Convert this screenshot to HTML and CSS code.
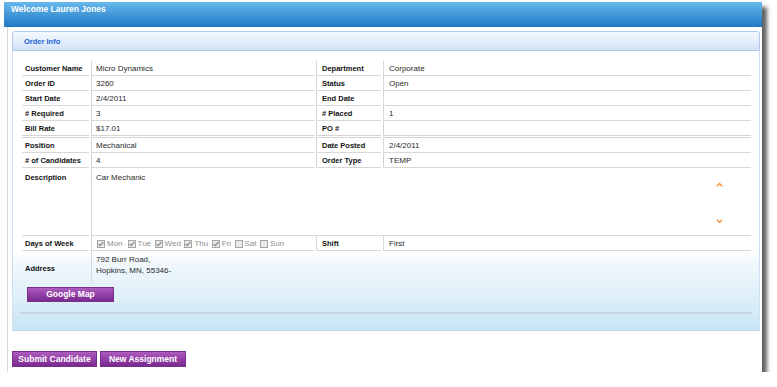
FILE: index.html
```html
<!DOCTYPE html>
<html>
<head>
<meta charset="utf-8">
<title>Order Info</title>
<link rel="stylesheet" href="styles.css">
</head>
<body>
<div class="panel">
  <div class="topbar">Welcome Lauren Jones</div>
  <div class="panel-body">
    <div class="section">
      <div class="section-head">Order Info</div>
      <div class="section-body">
        <div class="grid">
          <div class="cell lbl">Customer Name</div><div class="cell val">Micro Dynamics</div><div class="cell lbl l2">Department</div><div class="cell val v2">Corporate</div>
          <div class="cell lbl">Order ID</div><div class="cell val">3260</div><div class="cell lbl l2">Status</div><div class="cell val v2">Open</div>
          <div class="cell lbl">Start Date</div><div class="cell val">2/4/2011</div><div class="cell lbl l2">End Date</div><div class="cell val v2"></div>
          <div class="cell lbl"># Required</div><div class="cell val">3</div><div class="cell lbl l2"># Placed</div><div class="cell val v2">1</div>
          <div class="cell lbl dbl">Bill Rate</div><div class="cell val dbl">$17.01</div><div class="cell lbl l2 dbl">PO #</div><div class="cell val v2 dbl"></div>
          <div class="cell lbl">Position</div><div class="cell val">Mechanical</div><div class="cell lbl l2">Date Posted</div><div class="cell val v2">2/4/2011</div>
          <div class="cell lbl"># of Candidates</div><div class="cell val">4</div><div class="cell lbl l2">Order Type</div><div class="cell val v2">TEMP</div>
          <div class="cell lbl desc-lbl">Description</div>
          <div class="cell val desc">
            <div class="desc-text">Car Mechanic</div>
            <div class="scroll">
              <svg width="7" height="5" viewBox="0 0 7 5"><path d="M0.8 4.2 L3.5 1.4 L6.2 4.2" fill="none" stroke="#f39444" stroke-width="1.4"/></svg>
              <svg width="7" height="5" viewBox="0 0 7 5"><path d="M0.8 0.8 L3.5 3.6 L6.2 0.8" fill="none" stroke="#f39444" stroke-width="1.4"/></svg>
            </div>
          </div>
          <div class="cell lbl">Days of Week</div>
          <div class="cell val days">
            <span class="day"><svg class="cb" width="8" height="8" viewBox="0 0 8 8"><rect x="0.5" y="0.5" width="7" height="7" fill="#ebebeb" stroke="#a5a5a5"/><path d="M1.7 4 L3.3 5.7 L6.4 2" fill="none" stroke="#8c8c8c" stroke-width="1.2"/></svg>Mon</span>
            <span class="day"><svg class="cb" width="8" height="8" viewBox="0 0 8 8"><rect x="0.5" y="0.5" width="7" height="7" fill="#ebebeb" stroke="#a5a5a5"/><path d="M1.7 4 L3.3 5.7 L6.4 2" fill="none" stroke="#8c8c8c" stroke-width="1.2"/></svg>Tue</span>
            <span class="day"><svg class="cb" width="8" height="8" viewBox="0 0 8 8"><rect x="0.5" y="0.5" width="7" height="7" fill="#ebebeb" stroke="#a5a5a5"/><path d="M1.7 4 L3.3 5.7 L6.4 2" fill="none" stroke="#8c8c8c" stroke-width="1.2"/></svg>Wed</span>
            <span class="day"><svg class="cb" width="8" height="8" viewBox="0 0 8 8"><rect x="0.5" y="0.5" width="7" height="7" fill="#ebebeb" stroke="#a5a5a5"/><path d="M1.7 4 L3.3 5.7 L6.4 2" fill="none" stroke="#8c8c8c" stroke-width="1.2"/></svg>Thu</span>
            <span class="day"><svg class="cb" width="8" height="8" viewBox="0 0 8 8"><rect x="0.5" y="0.5" width="7" height="7" fill="#ebebeb" stroke="#a5a5a5"/><path d="M1.7 4 L3.3 5.7 L6.4 2" fill="none" stroke="#8c8c8c" stroke-width="1.2"/></svg>Fri</span>
            <span class="day"><svg class="cb" width="8" height="8" viewBox="0 0 8 8"><rect x="0.5" y="0.5" width="7" height="7" fill="#ebebeb" stroke="#a5a5a5"/></svg>Sat</span>
            <span class="day"><svg class="cb" width="8" height="8" viewBox="0 0 8 8"><rect x="0.5" y="0.5" width="7" height="7" fill="#ebebeb" stroke="#a5a5a5"/></svg>Sun</span>
          </div>
          <div class="cell lbl l2">Shift</div><div class="cell val v2">First</div>
          <div class="cell lbl addr-lbl">Address</div>
          <div class="cell val addr">792 Burr Road,<br>Hopkins, MN, 55346-</div>
        </div>
        <div class="map-row"><button class="btn map-btn">Google Map</button></div>
        <div class="rule"></div>
      </div>
    </div>
    <div class="actions">
      <button class="btn submit-btn">Submit Candidate</button>
      <button class="btn assign-btn">New Assignment</button>
    </div>
  </div>
</div>
</body>
</html>
```
FILE: styles.css
```css
* { box-sizing: border-box; }

body {
  margin: 0;
  background: #fff;
  font-family: "Liberation Sans", Arial, sans-serif;
}

.panel {
  margin: 2px 0 0 4px;
  width: 758px;
  height: 370px;
  background: #fff;
  box-shadow: 5px 5px 4px rgba(0, 0, 0, 0.62);
  display: flex;
  flex-direction: column;
}

.topbar {
  height: 25px;
  padding: 2px 0 0 7px;
  color: #fff;
  font-weight: bold;
  font-size: 8.5px;
  line-height: 11px;
  background: linear-gradient(to bottom, #67b8eb 0%, #3f95d6 55%, #1f78c4 100%);
}

.panel-body {
  flex: 1;
  margin-left: 3px;
  border-left: 1px solid #d6d6d6;
  padding: 4px 2px 5px 4px;
}

.section-head {
  height: 20px;
  border: 1px solid #b3c8ea;
  border-radius: 3px 3px 0 0;
  background: linear-gradient(to bottom, #f5f9ff 0%, #e4edfb 50%, #d3e2f8 100%);
  color: #1a63d8;
  font-weight: bold;
  font-size: 7.5px;
  line-height: 18px;
  padding: 1px 0 0 11px;
}

.section-body {
  height: 280px;
  border-left: 1px solid #cfe0f4;
  border-right: 1px solid #cfe0f4;
  border-bottom: 1px solid #b5d5ec;
  padding: 10px 0 0 9px;
  background: linear-gradient(to bottom, #ffffff 0px, #ffffff 200px, #f1f8fd 212px, #dff0f9 245px, #c8e5f5 279px);
}

.grid {
  display: grid;
  grid-template-columns: 67px 223px 65px 368px;
  grid-template-rows: 15px 15px 15px 15px 17px 15px 15px 68px 15px 33px;
  column-gap: 2px;
}

.cell {
  border-bottom: 1px solid #d8d8d8;
  line-height: 14px;
  padding-top: 1px;
  white-space: nowrap;
  overflow: hidden;
}

.lbl {
  font-weight: bold;
  font-size: 7.5px;
  color: #111;
  padding-left: 3px;
}

.l2 {
  border-left: 1px solid #d8d8d8;
  padding-left: 5px;
}

.val {
  font-size: 8px;
  color: #2a2a2a;
  border-left: 1px solid #d8d8d8;
  padding-left: 4px;
}

.v2 { padding-left: 5px; }

.grid .dbl {
  border-bottom: 3px double #d4d4d4;
}

.desc-lbl { padding-top: 3px; }

.desc {
  grid-column: 2 / span 3;
  display: flex;
  padding-top: 3px;
}

.desc-text { flex: 1; }

.scroll {
  width: 7px;
  margin-right: 28px;
  display: flex;
  flex-direction: column;
  justify-content: space-between;
  padding: 11px 0 11px;
}

.scroll svg { display: block; }

.days {
  display: flex;
  align-items: center;
  padding-left: 5px;
  padding-top: 2px;
}

.day {
  display: inline-flex;
  align-items: center;
  color: #8e8e8e;
  font-size: 8px;
  margin-right: 3.5px;
}

.day:first-child { margin-right: 5px; }

.cb {
  display: block;
  margin-right: 2px;
}

.addr-lbl {
  border-bottom: none;
  display: flex;
  align-items: center;
  padding-top: 3px;
}

.addr {
  grid-column: 2 / span 3;
  border-bottom: none;
  line-height: 11px;
  padding-top: 3px;
}

.btn {
  display: block;
  border: 1px solid #74308a;
  background: linear-gradient(to bottom, #ad5cbe 0%, #9340a6 50%, #7a2a8e 100%);
  color: #fff;
  font-family: "Liberation Sans", Arial, sans-serif;
  font-weight: bold;
  font-size: 8.5px;
  padding: 0;
  text-align: center;
}

.map-row {
  margin-top: 3px;
  padding-left: 5px;
}

.map-btn {
  width: 87px;
  height: 15px;
  line-height: 13px;
}

.rule {
  margin: 10px 0 0 -2px;
  width: 732px;
  height: 2px;
  background: #c7d3e4;
}

.actions {
  margin-top: 20px;
  display: flex;
  gap: 3px;
}

.submit-btn { width: 85px; height: 16px; line-height: 14px; }
.assign-btn { width: 86px; height: 16px; line-height: 14px; }
```
